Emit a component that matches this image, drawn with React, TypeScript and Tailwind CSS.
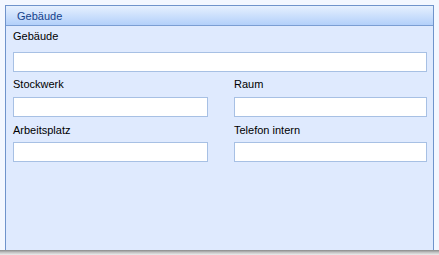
import React from 'react';

type Field = { label: string };

const row2: Field[] = [{ label: 'Stockwerk' }, { label: 'Raum' }];
const row3: Field[] = [{ label: 'Arbeitsplatz' }, { label: 'Telefon intern' }];

function Input({ className = '' }: { className?: string }) {
    return (
        <input
            type="text"
            className={`block h-[20px] border border-[#a7c0e4] bg-white px-1 text-[11px] outline-none ${className}`}
        />
    );
}

export default function App() {
    return (
        <div
            className="flex h-[255px] w-[439px] flex-col bg-[#f3f7ff] text-[11px] text-black"
            style={{ fontFamily: '"Liberation Sans", Arial, sans-serif' }}
        >
            <div className="flex h-[250px] pl-[5px] pt-[5px]">
                <div className="flex w-[429px] flex-col border-x border-t border-[#6f93cb] bg-[#dfeafe]">
                    {/* header */}
                    <div className="h-[20px] border-b border-[#7b9ed3] bg-gradient-to-b from-[#e6f0fe] to-[#b3d0fa] pl-[11px] pt-[1px] leading-[18px] text-[#15428b]">
                        Gebäude
                    </div>

                    {/* body */}
                    <div className="flex flex-col pl-[7px] pr-[6px] pt-[4px]">
                        <label className="mb-[9px] leading-[13px]">Gebäude</label>
                        <Input className="w-[414px]" />

                        <div className="mt-[6px] grid grid-cols-[195px_193px] gap-x-[26px]">
                            {row2.map((f) => (
                                <div key={f.label} className="flex flex-col">
                                    <label className="mb-[6px] leading-[13px]">{f.label}</label>
                                    <Input className="w-full" />
                                </div>
                            ))}
                        </div>

                        <div className="mt-[7px] grid grid-cols-[195px_193px] gap-x-[26px]">
                            {row3.map((f) => (
                                <div key={f.label} className="flex flex-col">
                                    <label className="mb-[5px] leading-[13px]">{f.label}</label>
                                    <Input className="w-full" />
                                </div>
                            ))}
                        </div>
                    </div>
                </div>
            </div>
            {/* bottom edge */}
            <div className="h-[5px] bg-gradient-to-b from-[#8a8a8a] via-[#c4c4c4] to-[#eeeeee]" />
        </div>
    );
}
